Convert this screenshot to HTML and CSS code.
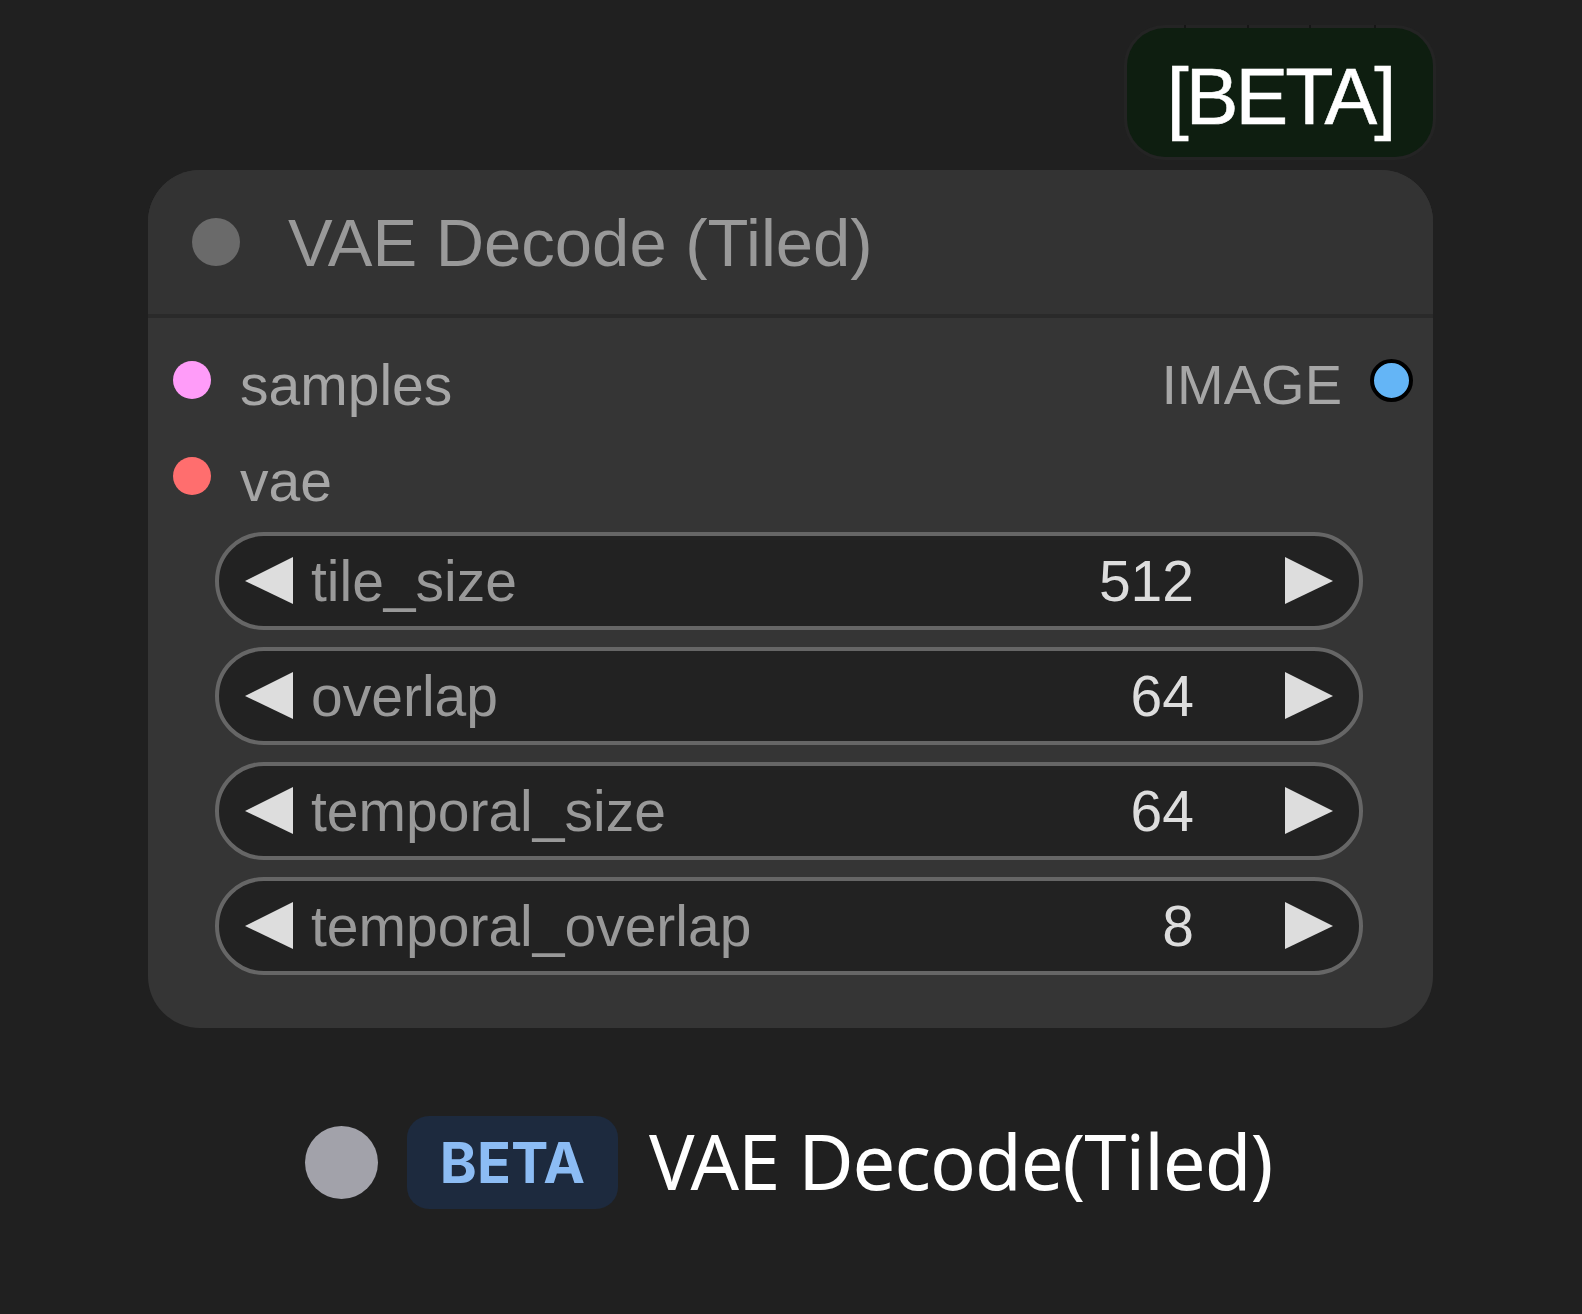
FILE: index.html
```html
<!DOCTYPE html>
<html>
<head>
<meta charset="utf-8">
<link rel="stylesheet" href="styles.css">
</head>
<body>
<main class="page">
  <section class="stage">
    <div class="badge-row">
      <div class="beta-badge">
        <span class="tick t1"></span><span class="tick t2"></span><span class="tick t3"></span><span class="tick t4"></span>
        [BETA]
      </div>
    </div>
    <div class="node">
      <div class="node-title">
        <span class="title-dot"></span>
        <span class="title-text">VAE Decode (Tiled)</span>
      </div>
      <div class="node-body">
        <div class="slot-row">
          <div class="slot-in">
            <span class="slot-dot latent"></span>
            <span class="slot-label">samples</span>
          </div>
          <div class="slot-out">
            <span class="slot-label">IMAGE</span>
            <span class="slot-dot image"></span>
          </div>
        </div>
        <div class="slot-row">
          <div class="slot-in">
            <span class="slot-dot vae"></span>
            <span class="slot-label">vae</span>
          </div>
        </div>
        <div class="widgets">
          <div class="widget">
            <svg class="arrow" width="48" height="48" viewBox="0 0 48 48"><polygon points="0,24 48,0 48,47" fill="#dddddd"/></svg>
            <span class="w-label">tile_size</span>
            <span class="w-value">512</span>
            <svg class="arrow" width="48" height="48" viewBox="0 0 48 48"><polygon points="0,0 48,24 0,47" fill="#dddddd"/></svg>
          </div>
          <div class="widget">
            <svg class="arrow" width="48" height="48" viewBox="0 0 48 48"><polygon points="0,24 48,0 48,47" fill="#dddddd"/></svg>
            <span class="w-label">overlap</span>
            <span class="w-value">64</span>
            <svg class="arrow" width="48" height="48" viewBox="0 0 48 48"><polygon points="0,0 48,24 0,47" fill="#dddddd"/></svg>
          </div>
          <div class="widget">
            <svg class="arrow" width="48" height="48" viewBox="0 0 48 48"><polygon points="0,24 48,0 48,47" fill="#dddddd"/></svg>
            <span class="w-label">temporal_size</span>
            <span class="w-value">64</span>
            <svg class="arrow" width="48" height="48" viewBox="0 0 48 48"><polygon points="0,0 48,24 0,47" fill="#dddddd"/></svg>
          </div>
          <div class="widget">
            <svg class="arrow" width="48" height="48" viewBox="0 0 48 48"><polygon points="0,24 48,0 48,47" fill="#dddddd"/></svg>
            <span class="w-label">temporal_overlap</span>
            <span class="w-value">8</span>
            <svg class="arrow" width="48" height="48" viewBox="0 0 48 48"><polygon points="0,0 48,24 0,47" fill="#dddddd"/></svg>
          </div>
        </div>
      </div>
    </div>
  </section>
  <section class="result">
    <span class="result-dot"></span>
    <span class="result-pill">BETA</span>
    <span class="result-title">VAE Decode(Tiled)</span>
  </section>
</main>
</body>
</html>
```
FILE: styles.css
```css
html, body {
  margin: 0;
  padding: 0;
  background: #202020;
}
body {
  width: 1582px;
  height: 1314px;
  overflow: hidden;
  font-family: "Liberation Sans", Arial, sans-serif;
}
.page {
  display: flex;
  flex-direction: column;
  padding-top: 28px;
}
.stage {
  margin-left: 148px;
  width: 1285px;
  display: flex;
  flex-direction: column;
}
.badge-row {
  display: flex;
  justify-content: flex-end;
  margin-bottom: 13px;
}
.beta-badge {
  position: relative;
  width: 306px;
  height: 129px;
  box-sizing: border-box;
  border-radius: 38px;
  background: #0e1e10;
  box-shadow: 0 0 0 3px #242424;
  color: #ffffff;
  font-size: 79px;
  letter-spacing: -3px;
  line-height: 1;
  display: flex;
  align-items: center;
  justify-content: center;
  padding-top: 8px;
  -webkit-text-stroke: 0.6px #ffffff;
}
.tick {
  position: absolute;
  top: -3px;
  width: 2px;
  height: 3px;
  background: #161616;
}
.t1 { left: 57px; }
.t2 { left: 120px; }
.t3 { left: 182px; }
.t4 { left: 247px; }

.node {
  background: #353535;
  border-radius: 52px;
  overflow: hidden;
}
.node-title {
  height: 144px;
  background: #333333;
  border-bottom: 4px solid #2a2a2a;
  display: flex;
  align-items: center;
  padding-left: 44px;
  gap: 48px;
}
.title-dot {
  width: 48px;
  height: 48px;
  border-radius: 50%;
  background: #6a6a6a;
}
.title-text {
  font-size: 67px;
  line-height: 1;
  color: #999999;
}
.node-body {
  padding: 14px 0 53px;
}
.slot-row {
  height: 96px;
  display: flex;
  align-items: center;
  justify-content: space-between;
  padding: 0 20px 0 25px;
}
.slot-in, .slot-out {
  display: flex;
  align-items: center;
}
.slot-in { gap: 29px; }
.slot-out { gap: 28px; }
.slot-label {
  font-size: 57px;
  line-height: 1;
  color: #a6a6a6;
  padding-top: 10px;
}
.slot-out .slot-label {
  font-size: 56px;
}
.slot-dot {
  width: 38px;
  height: 38px;
  border-radius: 50%;
}
.slot-dot.latent { background: #ff9cf9; }
.slot-dot.vae { background: #ff6e6e; }
.slot-dot.image {
  width: 35px;
  height: 35px;
  background: #64b5f6;
  border: 4px solid #000000;
}
.widgets {
  display: flex;
  flex-direction: column;
  gap: 17px;
  margin: 8px 70px 0 67px;
}
.widget {
  height: 98px;
  box-sizing: border-box;
  border: 4px solid #666666;
  border-radius: 49px;
  background: #222222;
  display: flex;
  align-items: center;
  padding: 0 26px;
}
.arrow {
  flex: none;
  display: block;
}
.w-label {
  flex: 1;
  margin-left: 18px;
  font-size: 57px;
  line-height: 1;
  color: #999999;
}
.w-value {
  margin-right: 91px;
  font-size: 57px;
  line-height: 1;
  color: #dddddd;
}

.result {
  display: flex;
  align-items: center;
  margin-top: 88px;
  padding-left: 305px;
  height: 93px;
}
.result-dot {
  width: 73px;
  height: 73px;
  border-radius: 50%;
  background: #a2a2aa;
  margin-right: 29px;
}
.result-pill {
  width: 211px;
  height: 93px;
  border-radius: 22px;
  background: #1d2a3e;
  color: #8cbcf4;
  font-family: Inter, "Noto Sans", sans-serif;
  font-weight: 700;
  font-size: 56px;
  line-height: 1;
  display: flex;
  align-items: center;
  justify-content: center;
}
.result-title {
  margin-left: 31px;
  font-family: "Noto Sans", sans-serif;
  font-size: 76px;
  letter-spacing: -1px;
  line-height: 1;
  color: #ffffff;
  margin-top: -4px;
}
```
